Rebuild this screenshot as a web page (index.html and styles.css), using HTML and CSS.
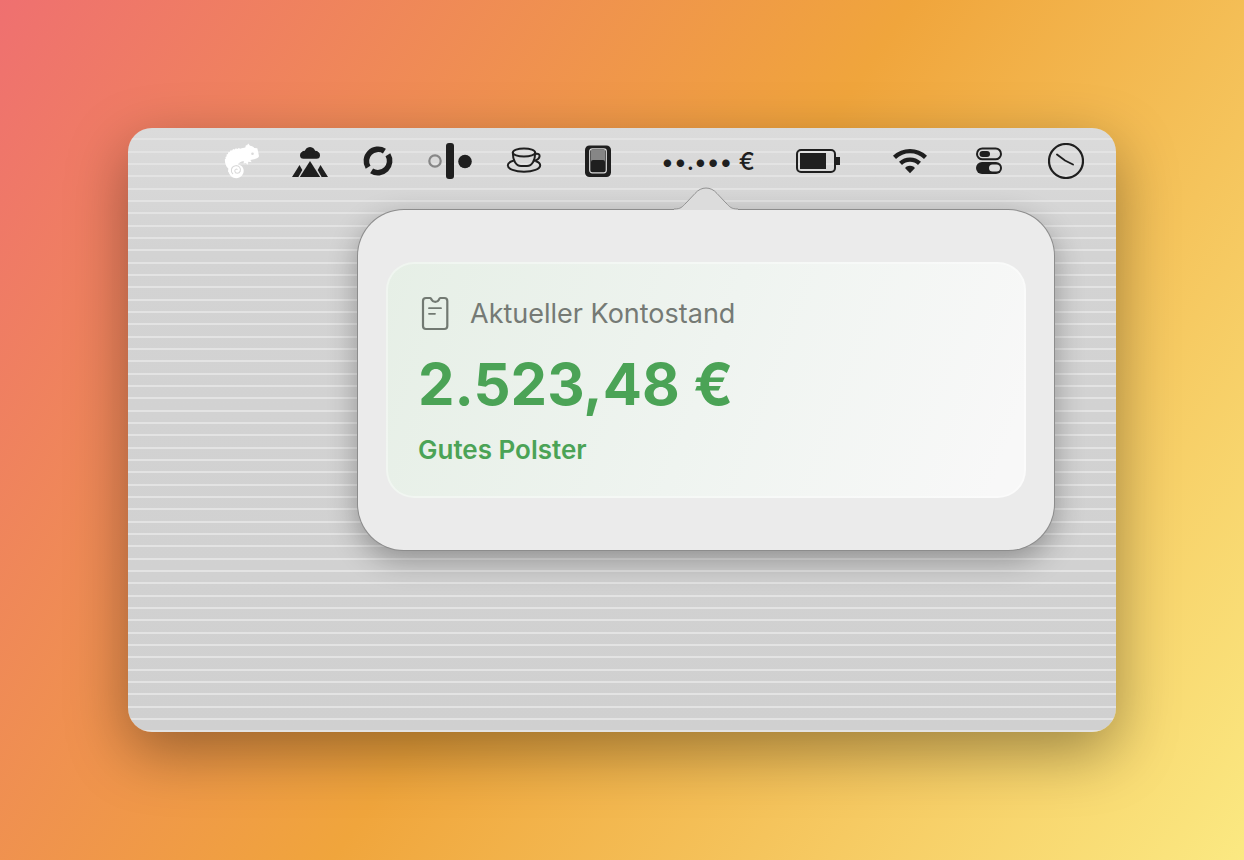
FILE: index.html
```html
<!DOCTYPE html>
<html lang="de">
<head>
    <meta charset="UTF-8">
    <meta name="viewport" content="width=device-width, initial-scale=1.0">
    <title>Kontostand</title>
    <link rel="stylesheet" href="styles.css">
</head>
<body>
    <main class="window">
        <nav class="menubar">
            <div class="menu-group">
                <button class="menu-item" aria-label="Chamäleon">
                    <svg width="36" height="36" viewBox="0 0 36 36">
                        <path fill="#fff" d="M21.300 4.600 22 2 23 2.600 24.200.4 26 2.800c2 .2 3.300.8 4.300 2.200L33.300 5.200 34.200 9l.8 4.200c-.8 1.800-2.800 2.600-5 3l-3.600.8 1.200 2.200-3.200-.4-.8 3-1.800-1.800-2.200.6.2-2.600c-3 .6-5.600 2-6 3.600 3.600.5 5.900 3 5.900 6.200 0 4-3.100 7.400-7.400 7.400-4 0-6.300-2.600-7.500-5.700L4 28.500l.3-3C2.100 23.600.8 20.300.8 16.400l1-.8-.4-1.600 1.300-.8-.2-1.700 1.500-.5.2-1.800 1.600-.2.700-1.700 1.600.2 1-1.400 1.500.4 1.300-1.200 1.400.6 1.500-.9 1.400.8 1.500-.6z"/>
                        <path fill="none" stroke="#dadada" stroke-width="1.100" d="M9 31c-3-2.900-1.800-7.500 2.400-8.300 3.800-.4 5.800 2.600 4.800 5.600-1 2.600-5 2.700-5.400-.1-.2-1.700 1.600-2.700 2.700-1.500"/>
                        <circle cx="28.500" cy="10.800" r="1.300" fill="#dadada"/>
                    </svg>
                </button>
                <button class="menu-item" aria-label="Landschaft">
                    <svg width="36" height="36" viewBox="0 0 36 36">
                        <rect x="8" y="8.700" width="20" height="7" rx="3.500"/>
                        <circle cx="18" cy="9.300" r="5.300"/>
                        <circle cx="12.500" cy="10.700" r="3"/>
                        <circle cx="23.500" cy="10.700" r="3"/>
                        <path d="m18 18 10.200 16H7.800z"/>
                        <path d="M0 34 7.500 22l2.800 5L6.400 34zM36 34l-7.500-12-2.800 5 3.900 7z"/>
                    </svg>
                </button>
                <button class="menu-item" aria-label="Synchronisation">
                    <svg width="36" height="36" viewBox="0 0 36 36" fill="none" stroke="#1f1f1f" stroke-width="5.600">
                        <path d="M8.100 24.300A11.800 11.800 0 0 1 24.400 8.100M27.900 11.700A11.800 11.800 0 0 1 11.600 27.900"/>
                    </svg>
                </button>
                <button class="menu-item" aria-label="Symbole ausblenden">
                    <svg width="44" height="36" viewBox="0 0 44 36">
                        <circle cx="7" cy="18" r="5.700" fill="none" stroke="#868686" stroke-width="2.200"/>
                        <rect x="18" y="0" width="8" height="36" rx="3"/>
                        <circle cx="37" cy="18.500" r="6.800"/>
                    </svg>
                </button>
                <button class="menu-item" aria-label="Kaffeepause">
                    <svg width="40" height="36" viewBox="0 0 40 36" fill="none" stroke="#1f1f1f" stroke-width="2">
                        <ellipse cx="20" cy="9.500" rx="11.200" ry="4"/>
                        <path d="M8.800 9.500C8.800 17.500 12 23 17 23h6c5 0 8.200-5.500 8.200-13.500"/>
                        <path d="M31.200 11c6-1.800 6.300 5-1.600 7"/>
                        <path d="M10 17.500c-3.800 1-6.200 2.700-6.200 4.700 0 3.900 7.200 6.500 16.200 6.500s16.200-2.600 16.200-6.500c0-1.700-1.700-3.100-4.700-4.200"/>
                    </svg>
                </button>
                <button class="menu-item menu-item-wide" aria-label="Schalter">
                    <svg width="26" height="36" viewBox="0 0 26 36">
                        <rect x="0" y="2.500" width="26" height="31.500" rx="4.500"/>
                        <rect x="4.700" y="5.800" width="16.600" height="24" rx="2.500" fill="none" stroke="#dcdcdc" stroke-width="1.200"/>
                        <rect x="6" y="7" width="14" height="12" fill="#868686"/>
                        <rect x="6" y="17" width="14" height="11.500" rx="2"/>
                    </svg>
                </button>
                <button class="menu-item menu-balance" aria-label="Kontostand anzeigen">••.••• €</button>
                <button class="menu-item" aria-label="Batterie">
                    <svg width="44" height="36" viewBox="0 0 44 36">
                        <rect x="1" y="7" width="38" height="22" rx="4" fill="none" stroke="#1f1f1f" stroke-width="2"/>
                        <rect x="4" y="10" width="26" height="16"/>
                        <rect x="39" y="14" width="5" height="8"/>
                    </svg>
                </button>
            </div>
            <div class="menu-group menu-system">
                <button class="menu-item" aria-label="WLAN">
                    <svg width="44" height="36" viewBox="0 0 44 36">
                        <path fill="none" stroke="#1f1f1f" stroke-width="4.400" d="M8.500 14.300a22.500 22.500 0 0 1 31 0M14.500 20.300a14 14 0 0 1 19 0"/>
                        <path d="M24 30.200 19.200 25.300c0-3.400 9.600-3.400 9.600 0z"/>
                    </svg>
                </button>
                <button class="menu-item" aria-label="Kontrollzentrum">
                    <svg width="26" height="36" viewBox="0 0 26 36">
                        <rect x="1" y="5.500" width="24" height="10.800" rx="5.400" fill="none" stroke="#1f1f1f" stroke-width="2"/>
                        <rect x="3.500" y="8" width="10.500" height="6" rx="3"/>
                        <rect x="0" y="19" width="26" height="12" rx="6"/>
                        <rect x="13" y="21.500" width="11" height="7" rx="3.500" fill="#dcdcdc"/>
                    </svg>
                </button>
                <button class="menu-item" aria-label="Uhr">
                    <svg width="36" height="36" viewBox="0 0 36 36" fill="none" stroke="#1f1f1f">
                        <circle cx="18" cy="18" r="17" stroke-width="2.200"/>
                        <path stroke-width="1.900" stroke-linecap="round" d="m9 11.500 8 6 8 4"/>
                    </svg>
                </button>
            </div>
        </nav>

        <section class="popover">
            <svg class="popover-arrow" width="64" height="24" viewBox="0 0 64 24">
                <path fill="#dcdcdc" d="M0 22c7 0 8-2 12-6l9-9.500C27-.8 37-.8 43 6.500l9 9.500c4 4 5 6 12 6v1H0z"/>
                <path fill="none" stroke="#929292" d="M0 22c7 0 8-2 12-6l9-9.500C27-.8 37-.8 43 6.500l9 9.500c4 4 5 6 12 6"/>
            </svg>
            <div class="card">
                <div class="card-header">
                    <svg width="34" height="40" viewBox="0 0 34 40" fill="none" stroke="#727972" stroke-width="2.200" stroke-linecap="round" stroke-linejoin="round">
                        <path d="M12 4H8a3 3 0 0 0-3 3v25a3 3 0 0 0 3 3h18.300a3 3 0 0 0 3-3V7a3 3 0 0 0-3-3h-4c-1 0-1 1-1.400 1.700-1.500 3-5.700 3-7.200 0C13 5 13 4 12 4z"/>
                        <path stroke-width="1.800" d="M11 14.200h12M11 19.800h6"/>
                    </svg>
                    <h1 class="card-label">Aktueller Kontostand</h1>
                </div>
                <p class="card-amount">2.523,48 €</p>
                <p class="card-status">Gutes Polster</p>
            </div>
        </section>
    </main>
</body>
</html>
```
FILE: styles.css
```css
* {
    box-sizing: border-box;
}

body {
    margin: 0;
    padding: 128px;
    min-height: 100vh;
    display: flex;
    font-family: Inter, "Liberation Sans", sans-serif;
    background: linear-gradient(124deg, #ef7070 0%, #f0a53c 50%, #fbe982 100%);
}

/* Desktop window with pinstripes, three stripes per 37px tile */
.window {
    flex: 1;
    min-width: 0;
    border-radius: 24px;
    background:
        linear-gradient(to bottom, transparent 0 10px, #e3e3e3 10px 12px, transparent 12px 23px, #e3e3e3 23px 25px, transparent 25px 35px, #e3e3e3 35px 37px) 0 0 / 100% 37px,
        linear-gradient(to bottom, #dbdbdb, #d3d3d3 20%, #d0d0d0);
    box-shadow: 0 20px 60px rgba(0, 0, 0, 0.36);
}

/* Menu bar */
.menubar {
    height: 66px;
    padding: 0 32px;
    display: flex;
    justify-content: flex-end;
    align-items: center;
    gap: 46px;
}

.menu-group {
    display: flex;
    align-items: center;
    gap: 32px;
}

.menu-system {
    gap: 46px;
}

.menu-item {
    display: flex;
    align-items: center;
    justify-content: center;
    flex: none;
    padding: 0;
    border: none;
    background: none;
    color: #1f1f1f;
    font-family: inherit;
}

.menu-item svg {
    display: block;
    fill: #1f1f1f;
}

.menu-item svg[fill="none"] {
    fill: none;
}

.menu-item-wide {
    width: 44px;
}

.menu-balance {
    width: 112px;
    font-size: 24px;
    font-weight: 500;
    font-feature-settings: "calt" 0;
    white-space: nowrap;
}

/* Popover */
.popover {
    position: relative;
    margin: 16px 62px 64px 230px;
    padding: 52px 28px;
    border-radius: 46px;
    background: #ebebeb;
    box-shadow: 0 0 0 1px #8c8c8c, 0 10px 30px rgba(0, 0, 0, 0.32);
}

.popover-arrow {
    position: absolute;
    bottom: 100%;
    left: 50%;
    margin: 0 0 -1px -32px;
}

.card {
    padding: 30px;
    border: 2px solid rgba(255, 255, 255, 0.4);
    border-radius: 28px;
    background: linear-gradient(110deg, #e6efe6, #eff4f0 50%, #f8f8f8 95%) border-box;
}

.card-header {
    display: flex;
    align-items: center;
    gap: 18px;
}

.card-label {
    margin: 0;
    font-size: 27px;
    line-height: 40px;
    font-weight: 400;
    color: #757a75;
}

.card-amount {
    margin: 16px 0;
    font-size: 58px;
    line-height: 68px;
    font-weight: 700;
    color: #4ba356;
}

.card-status {
    margin: 0;
    font-size: 26px;
    line-height: 32px;
    font-weight: 600;
    color: #4ba356;
}
```
